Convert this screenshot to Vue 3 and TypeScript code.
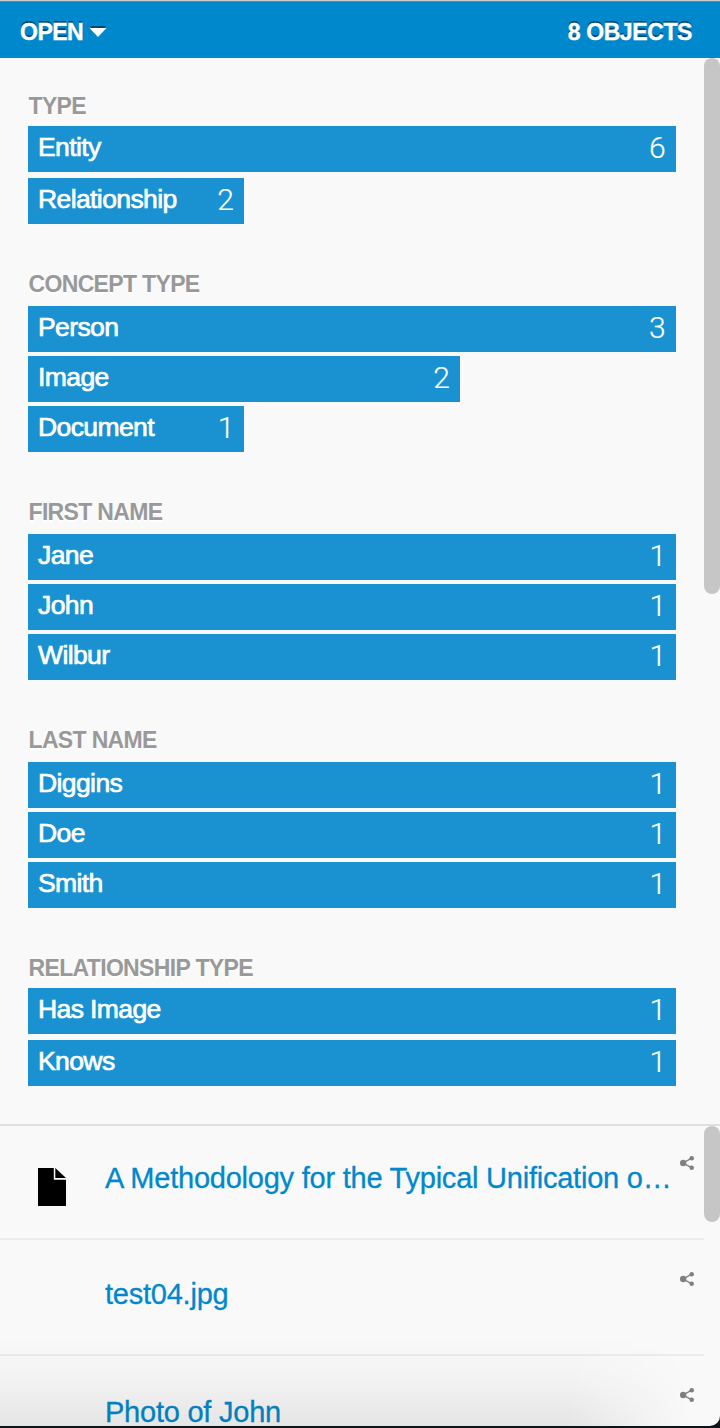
<script setup lang="ts">
interface Bar {
  label: string
  count: number
}
interface Facet {
  title: string
  kind: string
  bars: Bar[]
}
interface ResultItem {
  title: string
  hasIcon: boolean
}

const facets: Facet[] = [
  { title: 'TYPE', kind: 'wide', bars: [{ label: 'Entity', count: 6 }, { label: 'Relationship', count: 2 }] },
  {
    title: 'CONCEPT TYPE',
    kind: 'normal',
    bars: [{ label: 'Person', count: 3 }, { label: 'Image', count: 2 }, { label: 'Document', count: 1 }],
  },
  {
    title: 'FIRST NAME',
    kind: 'normal',
    bars: [{ label: 'Jane', count: 1 }, { label: 'John', count: 1 }, { label: 'Wilbur', count: 1 }],
  },
  {
    title: 'LAST NAME',
    kind: 'normal',
    bars: [{ label: 'Diggins', count: 1 }, { label: 'Doe', count: 1 }, { label: 'Smith', count: 1 }],
  },
  {
    title: 'RELATIONSHIP TYPE',
    kind: 'wide',
    bars: [{ label: 'Has Image', count: 1 }, { label: 'Knows', count: 1 }],
  },
]

const items: ResultItem[] = [
  { title: 'A Methodology for the Typical Unification o…', hasIcon: true },
  { title: 'test04.jpg', hasIcon: false },
  { title: 'Photo of John', hasIcon: false },
]

function barWidth(facet: Facet, bar: Bar): string {
  const max = Math.max(...facet.bars.map((b) => b.count))
  return `${(bar.count / max) * 100}%`
}
</script>

<template>
  <div class="screen">
    <div class="panel">
      <header class="toolbar">
        <span class="open">OPEN
          <svg class="caret" width="18" height="12" viewBox="0 0 18 12">
            <path d="M1 0H17L15.5 2H2.5Z" fill="#00476c" />
            <path d="M0.5 2H17.5L9 11Z" fill="#fff" />
          </svg>
        </span>
        <span class="total">8 OBJECTS</span>
      </header>

      <main class="facets">
        <div class="facet-list">
          <section v-for="facet in facets" :key="facet.title" class="facet" :class="facet.kind">
            <h2>{{ facet.title }}</h2>
            <div class="bars">
              <div v-for="bar in facet.bars" :key="bar.label" class="bar" :style="{ width: barWidth(facet, bar) }">
                <span class="label">{{ bar.label }}</span>
                <span class="count" :class="{ one: bar.count === 1 }">{{ bar.count }}</span>
              </div>
            </div>
          </section>
        </div>
        <div class="scrollbar facets-thumb"></div>
      </main>

      <div class="results">
        <ul>
          <li v-for="item in items" :key="item.title">
            <div class="thumb">
              <svg v-if="item.hasIcon" width="28" height="38" viewBox="0 0 28 38">
                <path d="M0 0H15.8V11.7H28V38H0Z" fill="#000" />
                <path d="M17.3 0V10H28Z" fill="#000" />
              </svg>
            </div>
            <span class="title">{{ item.title }}</span>
            <svg class="share" width="14" height="14" viewBox="0 0 14 14">
              <path d="M11.7 2.2L3.2 7L11.7 11.8" fill="none" stroke="#808080" stroke-width="1.4" />
              <circle cx="3.2" cy="7" r="3.2" fill="#808080" />
              <circle cx="11.7" cy="2.3" r="2.3" fill="#808080" />
              <circle cx="11.7" cy="11.7" r="2.3" fill="#808080" />
            </svg>
          </li>
        </ul>
        <div class="scrollbar results-thumb"></div>
      </div>
      <div class="shade"></div>
    </div>
  </div>
</template>

<style>
body {
  margin: 0;
  overflow: hidden;
}
</style>

<style scoped>
.screen {
  width: 720px;
  height: 1428px;
  overflow: hidden;
  background: #10131c;
  font-family: "Liberation Sans", Arial, sans-serif;
}
.panel {
  position: relative;
  display: flex;
  flex-direction: column;
  height: 1426px;
  overflow: hidden;
  background: #f9f9f9;
  border-bottom-right-radius: 10px;
}
.toolbar {
  box-sizing: border-box;
  flex: none;
  display: flex;
  justify-content: space-between;
  height: 58px;
  padding: 0 28px 0 20px;
  border-top: 1px solid #cbcbcb;
  background: #0088cc;
  box-shadow: inset 0 1px #5a8ba6;
  color: #fff;
  font-size: 23px;
  font-weight: 700;
  line-height: 62px;
  text-shadow: 0 -2px 0 #00476c;
  -webkit-text-stroke: 0.4px #fff;
}
.open {
  display: flex;
  align-items: flex-start;
  letter-spacing: -0.5px;
}
.total {
  letter-spacing: -0.4px;
}
.caret {
  margin: 25px 0 0 6px;
}
.facets {
  box-sizing: border-box;
  flex: none;
  display: flex;
  justify-content: space-between;
  height: 1068px;
  border-bottom: 2px solid #dfdfdf;
}
.facet-list {
  width: 647.7px;
  padding: 34px 0 0 28px;
}
.facet {
  margin-bottom: 46px;
}
h2 {
  height: 36px;
  margin: 0;
  padding-left: 0.5px;
  color: #999;
  font-size: 23px;
  font-weight: 700;
  line-height: 28px;
  letter-spacing: -0.66px;
  text-shadow: 0 2px 0 #fff;
}
.wide h2 {
  height: 34px;
}
.bars {
  display: flex;
  flex-direction: column;
  gap: 4px;
}
.wide .bars {
  gap: 6px;
}
.bar {
  box-sizing: border-box;
  display: flex;
  justify-content: space-between;
  height: 46px;
  padding: 0 10px 0 10px;
  background: #1a92d2;
  color: #fff;
}
.label {
  font-size: 26.5px;
  line-height: 42px;
  letter-spacing: -0.6px;
  -webkit-text-stroke: 0.7px #fff;
}
.count {
  font-family: Roboto, sans-serif;
  font-size: 30px;
  font-weight: 300;
  line-height: 43px;
  -webkit-text-stroke: 0.2px #fff;
}
.count.one {
  margin-right: -0.5px;
}
.scrollbar {
  flex: none;
  width: 16px;
  border-radius: 8px;
  background: #c6c6c6;
}
.facets-thumb {
  height: 536px;
}
.results {
  flex: 1;
  display: flex;
  min-height: 0;
}
.results-thumb {
  height: 96px;
}
ul {
  flex: none;
  width: 704px;
  margin: 0;
  padding: 0;
  list-style: none;
}
li {
  box-sizing: border-box;
  display: flex;
  height: 116px;
  padding: 32px 10px 0 38px;
  border-bottom: 2px solid #ececec;
}
li:first-child {
  height: 114px;
  padding-top: 30px;
}
li:last-child {
  height: 70px;
  border-bottom: 0;
}
.thumb {
  width: 67px;
  padding-top: 12px;
}
.title {
  flex: 1;
  padding-top: 8px;
  color: #0088cc;
  font-size: 29px;
  line-height: 28px;
  letter-spacing: -0.23px;
  white-space: nowrap;
  -webkit-text-stroke: 0.3px #0088cc;
}
li:last-child .title {
  padding-top: 10px;
}
.share {
  flex: none;
}
/* Soft window shadow cast over the lower edge, fading out to the right */
.shade {
  position: absolute;
  left: 0;
  right: 0;
  bottom: 0;
  height: 90px;
  background: linear-gradient(to bottom, rgba(0, 0, 0, 0), rgba(0, 0, 0, 0.018) 40%, rgba(0, 0, 0, 0.08));
  -webkit-mask-image: linear-gradient(to right, #000 570px, transparent 690px);
  mask-image: linear-gradient(to right, #000 570px, transparent 690px);
  pointer-events: none;
}
</style>
